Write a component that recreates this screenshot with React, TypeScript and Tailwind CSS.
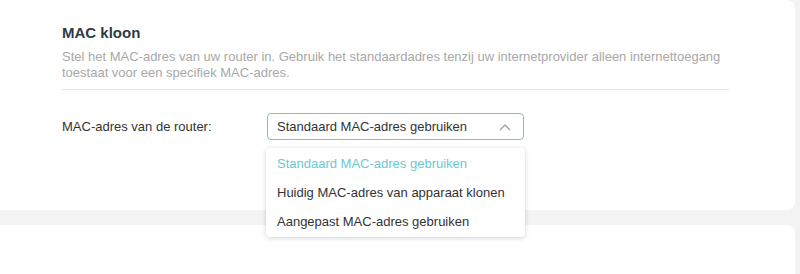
import React from "react";

function ChevronUp() {
  return (
    <svg width="12" height="8" viewBox="0 0 12 8" fill="none">
      <path d="M1.5 6.5 L6 2 L10.5 6.5" stroke="#a0a0a0" strokeWidth="1.3" strokeLinecap="round" strokeLinejoin="round" />
    </svg>
  );
}

export default function App() {
  const options = [
    "Standaard MAC-adres gebruiken",
    "Huidig MAC-adres van apparaat klonen",
    "Aangepast MAC-adres gebruiken",
  ];
  return (
    <div className="w-[800px] h-[274px] overflow-hidden bg-[#f3f3f3] flex flex-col gap-[15px] font-['Liberation_Sans',Arial,sans-serif]">
      <div className="w-[795px] h-[210px] shrink-0 bg-white rounded-r-[8px] pl-[62px] pr-[66px] pt-[24px]">
        <h2 className="text-[15px] font-bold text-[#2f3b45] leading-[18px]">MAC kloon</h2>
        <p className="mt-[7px] text-[13px] leading-[16px] text-[#a8a8a8] pb-[8px] border-b border-[#e3e3e3]">
          Stel het MAC-adres van uw router in. Gebruik het standaardadres tenzij uw internetprovider alleen internettoegang
          toestaat voor een specifiek MAC-adres.
        </p>
        <div className="mt-[23px] flex items-start">
          <div className="w-[205px] h-[27px] flex items-center text-[13px] text-[#333]">MAC-adres van de router:</div>
          <div className="relative w-[257px]">
            <div className="h-[27px] border border-[#6ec6d0] rounded-[4px] flex items-center justify-between pl-[9px] pr-[12px] text-[13px] text-[#333]">
              <span>Standaard MAC-adres gebruiken</span>
              <ChevronUp />
            </div>
            <div className="absolute left-[-1px] top-[35px] w-[259px] bg-white rounded-[4px] shadow-[0_1px_5px_rgba(0,0,0,0.18)] py-[1px] z-10">
              {options.map((o, i) => (
                <div
                  key={o}
                  className={`h-[29px] flex items-center px-[11px] text-[13px] whitespace-nowrap ${i === 0 ? "text-[#6cc8d2]" : "text-[#333]"}`}
                >
                  {o}
                </div>
              ))}
            </div>
          </div>
        </div>
      </div>
      <div className="w-[795px] flex-1 bg-white rounded-tr-[8px]" />
    </div>
  );
}
